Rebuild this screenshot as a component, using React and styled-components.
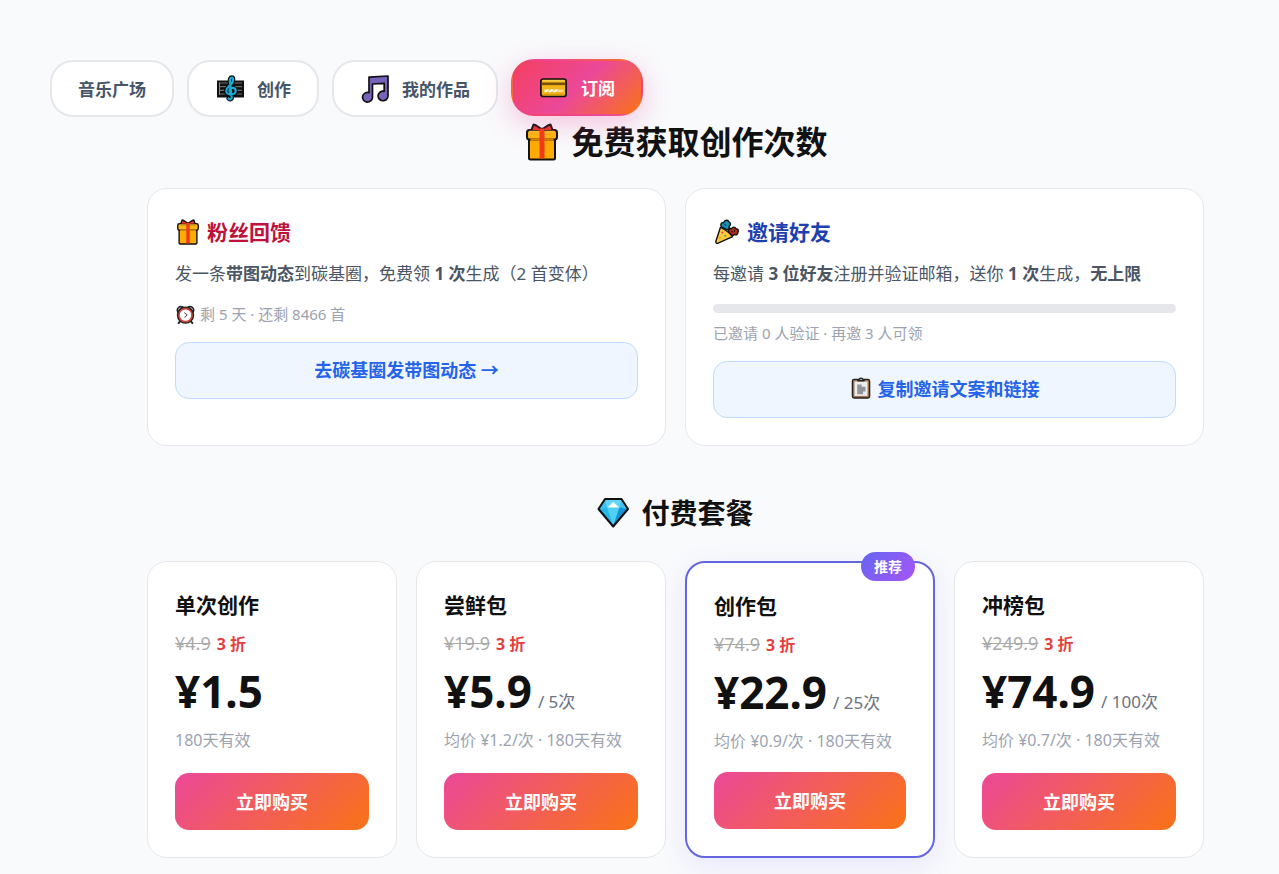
import styled, { createGlobalStyle, css } from 'styled-components';

const GlobalStyle = createGlobalStyle`
	* {
		box-sizing: border-box;
		margin: 0;
		padding: 0;
	}

	body {
		background: #f9fafc;
		color: #111;
		font-family: 'Noto Sans', 'Noto Sans CJK SC', sans-serif;
	}

	button {
		font-family: inherit;
		cursor: pointer;
	}
`

const Shell = styled.div`
	padding: 60px 50px 16px;

	@media screen and (max-width: 768px) {
		padding: 24px 16px;
	}
`

const Nav = styled.nav`
	display: flex;
	flex-wrap: wrap;
	gap: 13px;
	position: relative;
	z-index: 1;
`

const NavButton = styled.button`
	display: flex;
	align-items: center;
	gap: 12px;
	height: 57px;
	padding: 0 26px;
	border: 2px solid #e5e7eb;
	border-radius: 23px;
	background: #fff;
	color: #475569;
	font-size: 17px;
	font-weight: 700;

	${({ $active }) => $active && css`
		border-color: transparent;
		background: linear-gradient(135deg, #f43f5e, #ec4899 50%, #f97316);
		color: #fff;
		box-shadow: 0 8px 28px rgba(236, 72, 153, 0.3);
		transform: translateY(-1px);
	`}
`

const Main = styled.main`
	padding: 0 25px 0 97px;

	@media screen and (max-width: 1000px) {
		padding: 0;
	}
`

const Heading = styled.h1`
	display: flex;
	align-items: center;
	justify-content: center;
	gap: 10px;
	margin-bottom: 21px;
	font-size: 32px;
	line-height: 50px;
	font-weight: 700;
`

const SubHeading = styled.h2`
	display: flex;
	align-items: center;
	justify-content: center;
	gap: 12px;
	margin: 47px 0 28px;
	font-size: 28px;
	line-height: 40px;
	font-weight: 700;
`

const Grid = styled.div`
	display: grid;
	grid-template-columns: repeat(${({ $cols }) => $cols}, minmax(0, 1fr));
	gap: 19px;

	@media screen and (max-width: 1000px) {
		grid-template-columns: repeat(${({ $cols }) => $cols / 2}, minmax(0, 1fr));
	}
`

const Card = styled.section`
	display: flex;
	flex-direction: column;
	padding: 27px;
	border: 1px solid #e5e7eb;
	border-radius: 20px;
	background: #fff;
	position: relative;

	${({ $featured }) => $featured && css`
		border: 2px solid #6366e0;
		box-shadow: 0 8px 28px rgba(99, 102, 241, 0.12);
	`}
`

const CardTitle = styled.h3`
	display: flex;
	align-items: center;
	gap: 6px;
	color: ${({ $color }) => $color || '#111'};
	font-size: 21px;
	line-height: 32px;
	font-weight: 700;
`

const Desc = styled.p`
	margin-top: 11px;
	color: #4b5563;
	font-size: 17px;
	line-height: 29px;
`

const Status = styled.p`
	display: flex;
	align-items: center;
	gap: 4px;
	margin: ${({ $tight }) => ($tight ? 7 : 13)}px 0 15px;
	color: #9ca3af;
	font-size: 15px;
	line-height: 26px;
`

const Track = styled.div`
	height: 9px;
	margin-top: 16px;
	border-radius: 5px;
	background: #e5e7eb;
	overflow: hidden;
`

const Fill = styled.div`
	height: 100%;
	background: #6366f1;
`

const SoftButton = styled.button`
	display: flex;
	align-items: center;
	justify-content: center;
	gap: 6px;
	height: 57px;
	padding-bottom: 3px;
	border: 1px solid #bfdbfe;
	border-radius: 14px;
	background: #eff6ff;
	color: #2563eb;
	font-size: 18px;
	font-weight: 700;
`

const Badge = styled.span`
	position: absolute;
	top: -11px;
	right: 18px;
	padding: 0 13px;
	border-radius: 15px;
	background: linear-gradient(135deg, #6366f1, #a855f7);
	color: #fff;
	font-size: 14px;
	line-height: 29px;
	font-weight: 700;
`

const OldPrice = styled.p`
	display: flex;
	align-items: baseline;
	gap: 6px;
	margin-top: 8px;
	color: #aaa;
	font-size: 18px;
	line-height: 28px;
`

const Off = styled.strong`
	color: #e53e3e;
	font-size: 16px;
`

const Price = styled.p`
	margin-top: 3px;
	font-size: 44px;
	line-height: 60px;
	font-weight: 700;
	white-space: nowrap;
`

const Unit = styled.span`
	margin-left: 6px;
	color: #6b7280;
	font-size: 17px;
	line-height: 20px;
	font-weight: 400;
`

const Note = styled.p`
	margin: 6px 0 18px;
	color: #9ca3af;
	font-size: 16px;
	line-height: 26px;
	white-space: nowrap;
`

const BuyButton = styled.button`
	height: 57px;
	margin-top: auto;
	padding-bottom: 2px;
	border: 0;
	border-radius: 14px;
	background: linear-gradient(135deg, #ec4899, #f97316);
	color: #fff;
	font-size: 18px;
	font-weight: 700;
`

const Icon = styled.svg`
	flex: none;
	width: ${({ $size }) => $size}px;
	height: ${({ $size }) => $size}px;
`

const GiftIcon = ({ size }) => (
	<Icon $size={size} viewBox="0 0 38 38" aria-hidden="true" stroke="#111" strokeWidth="2" strokeLinejoin="round">
		<path d="M6 16h26v19a1.500 1.500 0 0 1-1.500 1.500h-23A1.500 1.500 0 0 1 6 35z" fill="#ffab00" />
		<rect x="4" y="7" width="30" height="9.500" rx="2.500" fill="#ffb70d" />
		<path d="M7.500 16.500h23" stroke="#d98500" strokeWidth="2.200" />
		<path d="M19 6C16 5 14 2 10.500 1.500L8 8h11zM19 6c3-1 5-4 8.500-4.500L30 8H19z" fill="#e8342a" />
		<path d="M6.500 8.500h25" stroke="#ffc431" strokeWidth="1.500" />
		<path d="M16.500 5.500h5v30h-5z" fill="#f03a17" stroke="none" />
	</Icon>
)

const ClefIcon = () => (
	<Icon $size={30} viewBox="0 0 30 30" aria-hidden="true">
		<path d="M2 6.500h27v17H2z" fill="#111" />
		<path d="M4 9h23M4 12.700h23M4 16.400h23M4 20h23" stroke="#6c6c6c" strokeWidth="1.200" />
		<path d="M4.500 8.500v12.500" stroke="#8a8a8a" strokeWidth="1" />
		<g fill="none" strokeLinecap="round" strokeLinejoin="round">
			<path d="M13.500 24.500c1 1.300 3.500 1 3.200-1.300L15 8.500c-.5-3.500.5-5 1.900-5s2 3-.2 6c-2 2.700-5.500 4-5.500 7.500 0 4.800 9.500 4.800 9.500 0 0-4-6.300-4-6.300-.3 0 1 .6 1.800 1.300 2.300" stroke="#0b0b0b" strokeWidth="4.400" />
			<path d="M13.500 24.500c1 1.300 3.500 1 3.200-1.300L15 8.500c-.5-3.500.5-5 1.900-5s2 3-.2 6c-2 2.700-5.500 4-5.500 7.500 0 4.800 9.500 4.800 9.500 0 0-4-6.300-4-6.300-.3 0 1 .6 1.800 1.300 2.300" stroke="#1ba9d6" strokeWidth="2.200" />
		</g>
	</Icon>
)

const NotesIcon = () => (
	<Icon $size={30} viewBox="0 0 30 30" aria-hidden="true">
		<path
			d="M9 3.200 28 2v20a5 4.800 0 1 1-3.800-4.700V9.300L12.500 10v13.500A5 4.800 0 1 1 9 18.700z"
			fill="#7763b8"
			stroke="#111"
			strokeWidth="1.700"
			strokeLinejoin="round"
		/>
	</Icon>
)

const CardIcon = () => (
	<Icon $size={30} viewBox="0 0 30 30" aria-hidden="true">
		<rect x="1.900" y="6" width="25.200" height="17.500" rx="2.300" fill="#f0b41c" stroke="#111" strokeWidth="1.700" />
		<path d="M2.700 9.500h23.600v2.600H2.700z" fill="#79500a" />
		<path d="M3.500 7.800h22" stroke="#ffd65a" />
		<path d="M5 16.500h19.500V19H5z" fill="#f7dc8c" />
		<path d="m6 19 3-2.500M10.500 19l3-2.500M15 19l3-2.500" stroke="#fff" strokeWidth="1.600" />
		<path d="M4 21.500h21" stroke="#d99a0b" />
	</Icon>
)

const ClockIcon = () => (
	<Icon $size={21} viewBox="0 0 32 32" aria-hidden="true" strokeLinecap="round">
		<path d="m8 26-2.500 3M24 26l2.500 3" stroke="#222" strokeWidth="3" />
		<path d="M4 12C1.500 7 7 2 12 4.500zM28 12c2.500-5-3-10-8-7.500z" fill="#aaa" stroke="#222" strokeWidth="2" />
		<circle cx="16" cy="17" r="11.500" fill="#fff" stroke="#222" strokeWidth="3.500" />
		<circle cx="16" cy="17" r="10" fill="#fff" stroke="#c9453d" strokeWidth="2.600" />
		<path d="m14.500 13.500 4 3-3.500 4" fill="none" stroke="#444" strokeWidth="1.500" />
	</Icon>
)

const PartyIcon = () => (
	<Icon $size={28} viewBox="-2 -1 30 30" aria-hidden="true" stroke="#111" strokeWidth="1.500" strokeLinejoin="round">
		<path d="M7 8.500c-1.500-3 0-5 2.300-4.500 1-3 5-3.500 5.700-.8 2.500.5 2 4 .2 5 .8 2-1 4-3 3z" fill="#1a8fb5" />
		<path d="M15 14c-1-2.500 1-4.500 3-3.500 1-2.500 4-2 4.500 0 2.700 0 3.500 2.500 2 4 .5 2.500-2 3-3.500 2l-3 2z" fill="#b5301c" />
		<path d="m10.500 5.500 1.500 2M17.500 13.500l2 .5M21 11.500v2.500" strokeWidth="1" />
		<path d="M6 9c4 1.500 10.500 6.500 13 10L3.500 26c-1.600.7-2.900-.4-2.400-2z" fill="#ffc83d" />
		<g stroke="none">
			<circle cx="8" cy="14.500" r="1" fill="#e8342a" />
			<circle cx="11" cy="18" r="1" fill="#2aa775" />
			<circle cx="5.500" cy="20" r="1" fill="#f08c1a" />
		</g>
	</Icon>
)

const ClipboardIcon = () => (
	<Icon $size={22} viewBox="0 0 32 32" aria-hidden="true" stroke="#222" strokeWidth="2" strokeLinejoin="round">
		<rect x="3.500" y="3.500" width="25" height="27" rx="2.500" fill="#a57352" />
		<path d="M6.500 6.500h19v21h-19z" fill="#ededed" stroke="none" />
		<path d="M11.500 5.500V4H13c.5-3 5.500-3 6 0h1.500v1.500z" fill="#ccc" />
		<path d="M10.500 11H17v3h5.500v7H19v4h-8.500z" fill="#8f9598" stroke="none" />
	</Icon>
)

const GemIcon = () => (
	<Icon $size={32} viewBox="0 0 32 32" aria-hidden="true">
		<path d="M8 2h16.500L31 12 16.200 29.500 1.500 12z" fill="#28b5e8" />
		<path d="M8 2 10 11 2 12zM24.500 2 22 11l8 1z" fill="#3fc1ee" />
		<path d="M10 10.500h12.500l-6.300 18z" fill="#4fd0f7" />
		<path d="m22.500 10.500 8 1.500-14.300 17z" fill="#1793d6" />
		<path d="M8 2h16.500l-2 8.500H10z" fill="#5fd6fa" />
		<path d="m16.200 5 6 5.500H10.500z" fill="#fff" />
		<path d="M8 2h16.500L31 12 16.200 29.500 1.500 12z" fill="none" stroke="#111" strokeWidth="2" strokeLinejoin="round" />
	</Icon>
)

const tabs = [
	{ label: '音乐广场' },
	{ label: '创作', icon: <ClefIcon /> },
	{ label: '我的作品', icon: <NotesIcon /> },
	{ label: '订阅', icon: <CardIcon />, active: true },
]

const plans = [
	{ name: '单次创作', old: '¥4.9', price: '¥1.5', note: '180天有效' },
	{ name: '尝鲜包', old: '¥19.9', price: '¥5.9', unit: '/ 5次', note: '均价 ¥1.2/次 · 180天有效' },
	{ name: '创作包', old: '¥74.9', price: '¥22.9', unit: '/ 25次', note: '均价 ¥0.9/次 · 180天有效', featured: true },
	{ name: '冲榜包', old: '¥249.9', price: '¥74.9', unit: '/ 100次', note: '均价 ¥0.7/次 · 180天有效' },
]

const Plan = ({ plan }) => (
	<Card $featured={plan.featured}>
		{plan.featured && <Badge>推荐</Badge>}
		<CardTitle>{plan.name}</CardTitle>
		<OldPrice>
			<s>{plan.old}</s>
			<Off>3 折</Off>
		</OldPrice>
		<Price>
			{plan.price}
			{plan.unit && <Unit>{plan.unit}</Unit>}
		</Price>
		<Note>{plan.note}</Note>
		<BuyButton type="button">立即购买</BuyButton>
	</Card>
)

const App = () => {
	const invited = 0

	return (
		<Shell lang="zh-CN">
			<GlobalStyle />
			<Nav>
				{tabs.map((tab) => (
					<NavButton key={tab.label} type="button" $active={tab.active}>
						{tab.icon}
						{tab.label}
					</NavButton>
				))}
			</Nav>
			<Main>
				<Heading>
					<GiftIcon size={38} />
					免费获取创作次数
				</Heading>
				<Grid $cols={2}>
					<Card>
						<CardTitle $color="#be123c">
							<GiftIcon size={26} />
							粉丝回馈
						</CardTitle>
						<Desc>
							发一条<b>带图动态</b>到碳基圈，免费领 <b>1 次</b>生成（2 首变体）
						</Desc>
						<Status>
							<ClockIcon />
							剩 5 天 · 还剩 8466 首
						</Status>
						<SoftButton type="button">去碳基圈发带图动态 →</SoftButton>
					</Card>
					<Card>
						<CardTitle $color="#1e40af">
							<PartyIcon />
							邀请好友
						</CardTitle>
						<Desc>
							每邀请 <b>3 位好友</b>注册并验证邮箱，送你 <b>1 次</b>生成，<b>无上限</b>
						</Desc>
						<Track>
							<Fill style={{ width: `${(invited / 3) * 100}%` }} />
						</Track>
						<Status $tight>已邀请 {invited} 人验证 · 再邀 3 人可领</Status>
						<SoftButton type="button">
							<ClipboardIcon />
							复制邀请文案和链接
						</SoftButton>
					</Card>
				</Grid>
				<SubHeading>
					<GemIcon />
					付费套餐
				</SubHeading>
				<Grid $cols={4}>
					{plans.map((plan) => (
						<Plan key={plan.name} plan={plan} />
					))}
				</Grid>
			</Main>
		</Shell>
	)
}

export default App
